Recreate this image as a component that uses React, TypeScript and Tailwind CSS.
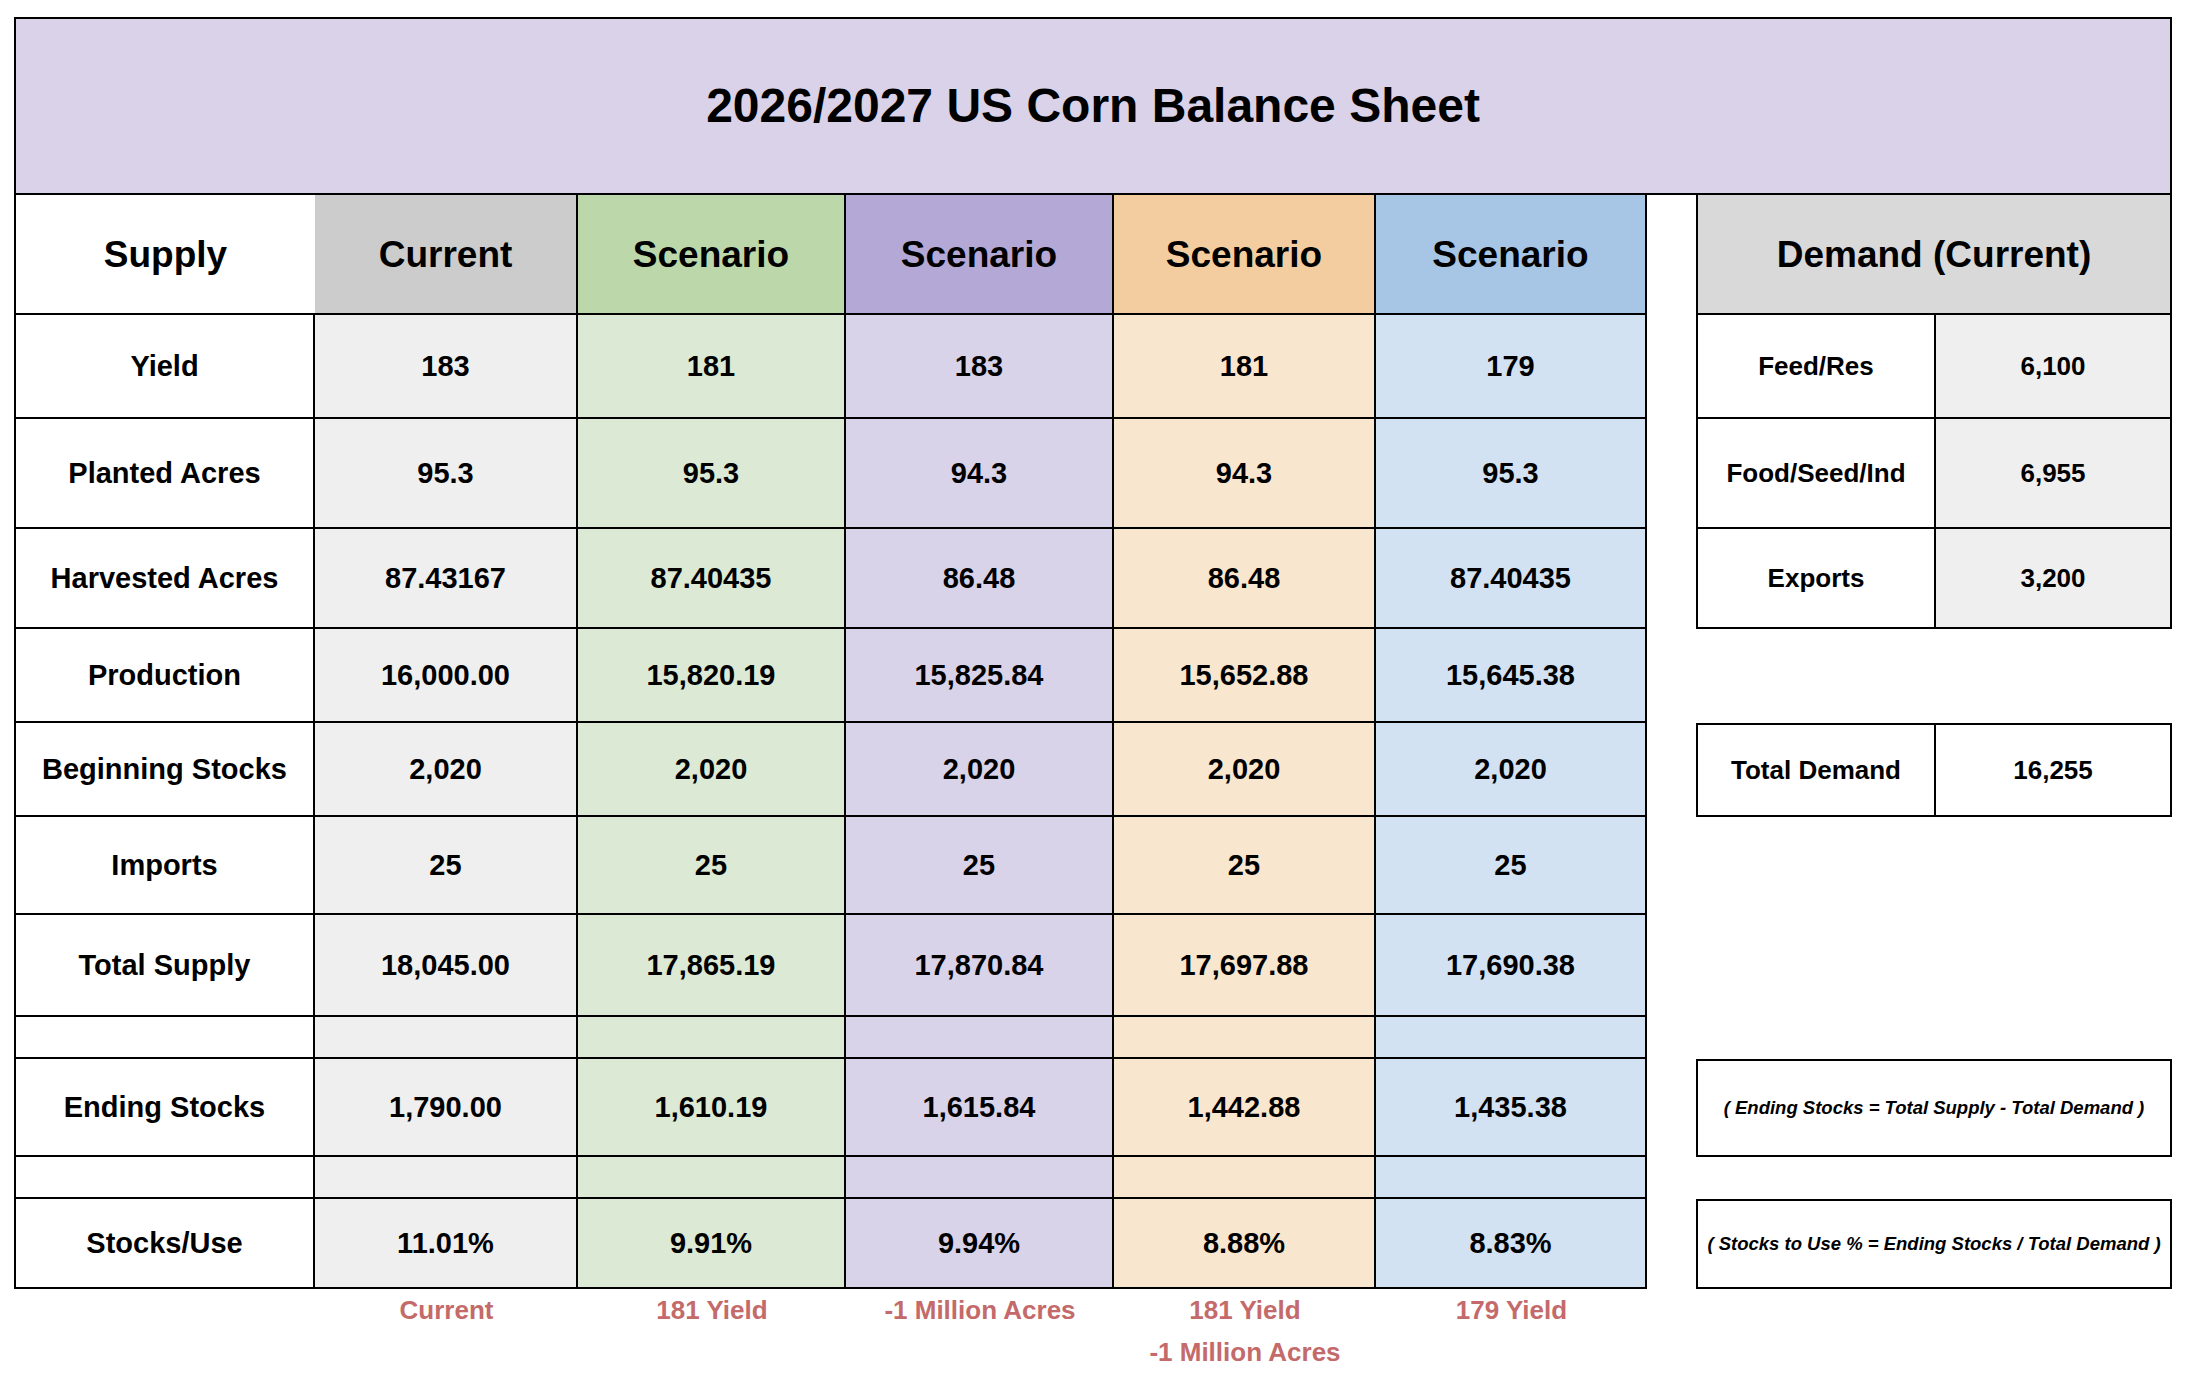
import React from 'react'

// Column palette: header shade + body shade for each scenario column
const COLS = [
  { head: 'bg-[#cccccc]', body: 'bg-[#efefef]', title: 'Current', foot: ['Current'] },
  { head: 'bg-[#bcd8aa]', body: 'bg-[#dce9d4]', title: 'Scenario', foot: ['181 Yield'] },
  { head: 'bg-[#b4a8d6]', body: 'bg-[#d9d3e9]', title: 'Scenario', foot: ['-1 Million Acres'] },
  { head: 'bg-[#f3cd9f]', body: 'bg-[#f9e6cf]', title: 'Scenario', foot: ['181 Yield', '-1 Million Acres'] },
  { head: 'bg-[#a7c5e5]', body: 'bg-[#d3e2f2]', title: 'Scenario', foot: ['179 Yield'] },
]

const ROWS: { label: string; values: string[] }[] = [
  { label: 'Yield', values: ['183', '181', '183', '181', '179'] },
  { label: 'Planted Acres', values: ['95.3', '95.3', '94.3', '94.3', '95.3'] },
  { label: 'Harvested Acres', values: ['87.43167', '87.40435', '86.48', '86.48', '87.40435'] },
  { label: 'Production', values: ['16,000.00', '15,820.19', '15,825.84', '15,652.88', '15,645.38'] },
  { label: 'Beginning Stocks', values: ['2,020', '2,020', '2,020', '2,020', '2,020'] },
  { label: 'Imports', values: ['25', '25', '25', '25', '25'] },
  { label: 'Total Supply', values: ['18,045.00', '17,865.19', '17,870.84', '17,697.88', '17,690.38'] },
  { label: '', values: ['', '', '', '', ''] },
  { label: 'Ending Stocks', values: ['1,790.00', '1,610.19', '1,615.84', '1,442.88', '1,435.38'] },
  { label: '', values: ['', '', '', '', ''] },
  { label: 'Stocks/Use', values: ['11.01%', '9.91%', '9.94%', '8.88%', '8.83%'] },
]

const GRID_COLS = 'grid grid-cols-[301px_263px_268px_268px_262px_271px_49px_240px_236px]'

function DemandSide({ row }: { row: number }) {
  // row is the 1-based body row index (header handled separately)
  const demand: Record<number, [string, string]> = {
    1: ['Feed/Res', '6,100'],
    2: ['Food/Seed/Ind', '6,955'],
    3: ['Exports', '3,200'],
  }
  if (demand[row]) {
    const [label, value] = demand[row]
    return (
      <>
        <div className="flex items-center justify-center border-b-2 border-l-2 border-r-2 border-black bg-white text-[26px]">
          {label}
        </div>
        <div className="flex items-center justify-center border-b-2 border-r-2 border-black bg-[#efefef] text-[26px]">
          {value}
        </div>
      </>
    )
  }
  if (row === 5) {
    return (
      <>
        <div className="flex items-center justify-center border-2 border-black bg-white text-[26px]">
          Total Demand
        </div>
        <div className="flex items-center justify-center border-y-2 border-r-2 border-black bg-white text-[26px]">
          16,255
        </div>
      </>
    )
  }
  if (row === 9 || row === 11) {
    return (
      <div className="col-span-2 flex items-center justify-center whitespace-nowrap border-2 border-black bg-white text-[18.5px] italic">
        {row === 9
          ? '( Ending Stocks = Total Supply - Total Demand )'
          : '( Stocks to Use % = Ending Stocks / Total Demand )'}
      </div>
    )
  }
  return <div className="col-span-2" />
}

export default function App() {
  return (
    <div className="min-h-screen bg-white pl-[14px] pt-[17px] font-['Liberation_Sans',Arial,sans-serif] font-bold leading-none text-black">
      <div className="flex h-[178px] w-[2158px] items-center justify-center border-2 border-black bg-[#d9d2e9] text-[48px]">
        2026/2027 US Corn Balance Sheet
      </div>

      <div className={`${GRID_COLS} grid-rows-[120px_104px_110px_100px_94px_94px_98px_102px_42px_98px_42px_90px] w-[2158px]`}>
        {/* header row */}
        <div className="flex items-center justify-center border-b-2 border-l-2 border-black bg-white text-[37px]">
          Supply
        </div>
        {COLS.map((c, i) => (
          <div
            key={i}
            className={`flex items-center justify-center border-b-2 border-r-2 border-black text-[37px] ${c.head}`}
          >
            {c.title}
          </div>
        ))}
        <div />
        <div className="col-span-2 flex items-center justify-center border-b-2 border-l-2 border-r-2 border-black bg-[#d9d9d9] text-[37px]">
          Demand (Current)
        </div>

        {ROWS.map((r, ri) => (
          <React.Fragment key={ri}>
            <div className="flex items-center justify-center border-b-2 border-l-2 border-r-2 border-black bg-white text-[29px]">
              {r.label}
            </div>
            {r.values.map((v, ci) => (
              <div
                key={ci}
                className={`flex items-center justify-center border-b-2 border-r-2 border-black text-[29px] ${COLS[ci].body}`}
              >
                {v}
              </div>
            ))}
            <div />
            <DemandSide row={ri + 1} />
          </React.Fragment>
        ))}
      </div>

      <div className={`${GRID_COLS} w-[2158px] text-[26px] leading-[42px] text-[#c46a6a]`}>
        <div />
        {COLS.map((c, i) => (
          <div key={i} className="flex flex-col items-center">
            {c.foot.map((line) => (
              <span key={line}>{line}</span>
            ))}
          </div>
        ))}
      </div>
    </div>
  )
}
